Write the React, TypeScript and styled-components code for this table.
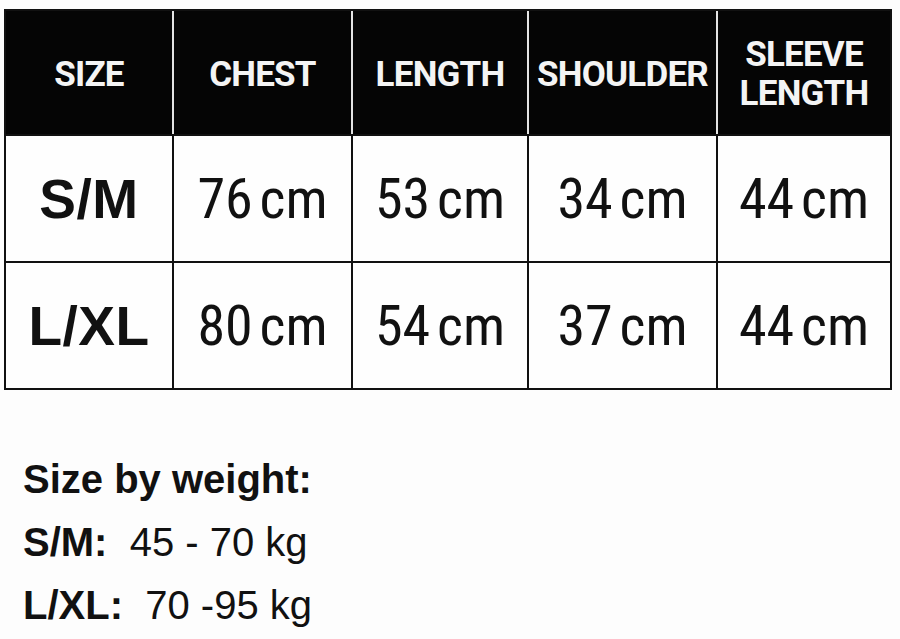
import React from "react";
import styled, { createGlobalStyle } from "styled-components";

const Global = createGlobalStyle`
  html, body { margin: 0; padding: 0; background: #fdfdfd; }
  body { font-family: "Liberation Sans", Arial, sans-serif; color: #111; }
`;

const Page = styled.div`
  width: 900px;
  height: 639px;
  padding: 9px 0 0 4px;
  box-sizing: border-box;
  display: flex;
  flex-direction: column;
`;

const Table = styled.div`
  width: 888px;
  border: 2px solid #111;
  box-sizing: border-box;
  display: grid;
  grid-template-columns: 166px 179px 176px 189px 174px;
  grid-template-rows: 123px 127px 127px;
  background: #fefefe;
`;

const HeadCell = styled.div<{ $first?: boolean }>`
  background: #050505;
  color: #f4f4f4;
  border-left: ${(p) => (p.$first ? "none" : "2px solid #e4e4e4")};
  display: flex;
  align-items: center;
  justify-content: center;
  text-align: center;
  font-family: "Roboto", "Liberation Sans", sans-serif;
  font-weight: 700;
  font-size: 35px;
  line-height: 39px;
  letter-spacing: -0.8px;
  padding-top: 3px;
  box-sizing: border-box;
`;

const Cell = styled.div<{ $first?: boolean }>`
  border-left: ${(p) => (p.$first ? "none" : "2px solid #111")};
  border-top: 2px solid #111;
  display: flex;
  align-items: center;
  justify-content: center;
  box-sizing: border-box;
`;

const SizeLabel = styled.span`
  font-family: "Liberation Sans", Arial, sans-serif;
  font-weight: 700;
  font-size: 55px;
  letter-spacing: 0.5px;
`;

const Value = styled.span`
  font-family: "Liberation Sans Narrow", "Roboto Condensed", "DejaVu Sans Condensed", sans-serif;
  font-weight: 400;
  font-size: 56px;
  word-spacing: -6px;
`;

const Notes = styled.div`
  margin-top: 58px;
  padding-left: 19px;
  display: flex;
  flex-direction: column;
  font-family: "Liberation Sans", Arial, sans-serif;
  font-size: 40px;
  line-height: 63px;
`;

const NoteTitle = styled.div`
  font-weight: 700;
`;

const NoteLine = styled.div`
  white-space: pre;
`;

const Bold = styled.span`
  font-weight: 700;
`;

const headers = ["SIZE", "CHEST", "LENGTH", "SHOULDER", "SLEEVE\nLENGTH"];
const rows = [
  ["S/M", "76 cm", "53 cm", "34 cm", "44 cm"],
  ["L/XL", "80 cm", "54 cm", "37 cm", "44 cm"],
];

export default function App() {
  return (
    <>
      <Global />
      <Page>
        <Table>
          {headers.map((h, i) => (
            <HeadCell key={h} $first={i === 0}>
              <span>
                {h.split("\n").map((l, j) => (
                  <React.Fragment key={j}>
                    {j > 0 && <br />}
                    {l}
                  </React.Fragment>
                ))}
              </span>
            </HeadCell>
          ))}
          {rows.map((r) =>
            r.map((v, i) => (
              <Cell key={r[0] + i} $first={i === 0}>
                {i === 0 ? <SizeLabel>{v}</SizeLabel> : <Value>{v}</Value>}
              </Cell>
            ))
          )}
        </Table>
        <Notes>
          <NoteTitle>Size by weight:</NoteTitle>
          <NoteLine>
            <Bold>S/M:</Bold>{"  45 - 70 kg"}
          </NoteLine>
          <NoteLine>
            <Bold>L/XL:</Bold>{"  70 -95 kg"}
          </NoteLine>
        </Notes>
      </Page>
    </>
  );
}
